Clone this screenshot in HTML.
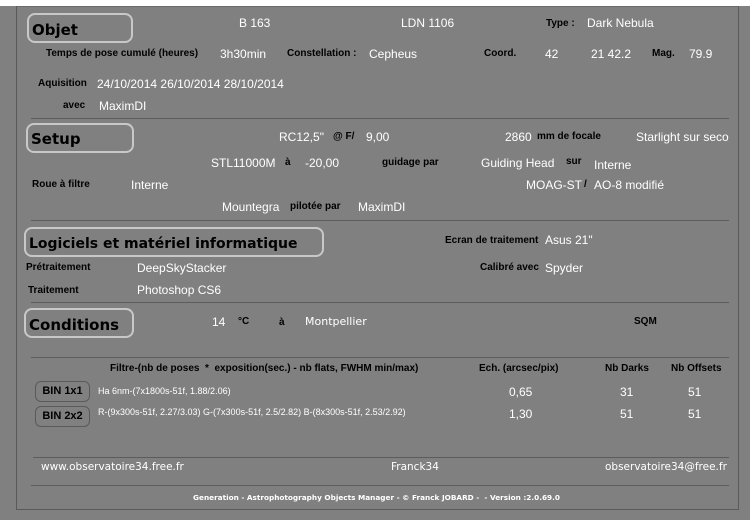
<!DOCTYPE html>
<html><head><meta charset="utf-8"><style>
html,body{margin:0;padding:0}
body{width:750px;height:520px;background:#808080;position:relative;overflow:hidden;font-family:"Liberation Sans",Arial,sans-serif}
.top{position:absolute;left:0;top:0;width:750px;height:6px;background:#fff}
.frame{position:absolute;left:16px;top:6px;width:721px;height:502px;border:1px solid #5a5a5a;border-top-color:#6a6a6a}
.t{position:absolute;white-space:nowrap;line-height:1}
.l{font-weight:bold;font-size:10px;color:#000}
.v{font-size:12px;color:#fff}
.hdr{position:absolute;border:2px solid #c8c8c8;border-radius:8px;box-sizing:border-box;font-family:"DejaVu Sans",Verdana,sans-serif;font-size:14px;color:#000;padding-left:3px;line-height:26px;font-weight:bold}
.hr{position:absolute;left:31px;width:698px;height:1px;background:#5c5c5c}
.bin{position:absolute;left:35px;width:55px;height:21px;border:1px solid #5a5a5a;border-radius:6px;box-sizing:border-box;font-weight:bold;font-size:11px;text-align:center;line-height:19px;color:#000}
.s{font-size:9px;color:#fff}
.f{font-family:"DejaVu Sans",Verdana,sans-serif;color:#fff;font-size:10.5px}
</style></head><body>
<div class="top"></div>
<div class="frame"></div>

<div class="hdr" style="left:27px;top:13px;width:106px;height:30px;line-height:30px;font-size:15px">Objet</div>
<div class="t v" style="left:239px;top:17px">B 163</div>
<div class="t v" style="left:401px;top:17px">LDN 1106</div>
<div class="t l" style="left:546px;top:19px">Type :</div>
<div class="t v" style="left:587px;top:17px">Dark Nebula</div>

<div class="t l" style="left:46px;top:49px">Temps de pose cumulé (heures)</div>
<div class="t v" style="left:220px;top:48px">3h30min</div>
<div class="t l" style="left:287px;top:49px">Constellation :</div>
<div class="t v" style="left:369px;top:48px">Cepheus</div>
<div class="t l" style="left:484px;top:49px">Coord.</div>
<div class="t v" style="left:545px;top:48px">42</div>
<div class="t v" style="left:591px;top:48px">21 42.2</div>
<div class="t l" style="left:652px;top:49px">Mag.</div>
<div class="t v" style="left:689px;top:48px">79.9</div>

<div class="t l" style="left:38px;top:79px">Aquisition</div>
<div class="t v" style="left:97px;top:78px">24/10/2014 26/10/2014 28/10/2014</div>
<div class="t l" style="left:63px;top:101px">avec</div>
<div class="t v" style="left:99px;top:100px">MaximDI</div>

<div class="hr" style="top:118px"></div>
<div class="hdr" style="left:26px;top:123px;width:108px;height:30px;line-height:29px;font-size:15px">Setup</div>
<div class="t v" style="left:279px;top:131px">RC12,5"</div>
<div class="t l" style="left:333px;top:132px">@ F/</div>
<div class="t v" style="left:366px;top:131px">9,00</div>
<div class="t v" style="left:505px;top:131px">2860</div>
<div class="t l" style="left:537px;top:132px">mm de focale</div>
<div class="t v" style="left:636px;top:131px">Starlight sur seco</div>

<div class="t v" style="left:211px;top:157px">STL11000M</div>
<div class="t l" style="left:285px;top:158px">à</div>
<div class="t v" style="left:305px;top:157px">-20,00</div>
<div class="t l" style="left:382px;top:158px">guidage par</div>
<div class="t v" style="left:481px;top:157px">Guiding Head</div>
<div class="t l" style="left:566px;top:157px">sur</div>
<div class="t v" style="left:594px;top:159px">Interne</div>

<div class="t l" style="left:32px;top:180px">Roue à filtre</div>
<div class="t v" style="left:131px;top:179px">Interne</div>
<div class="t v" style="left:526px;top:179px">MOAG-ST</div>
<div class="t l" style="left:584px;top:180px">/</div>
<div class="t v" style="left:594px;top:179px">AO-8 modifié</div>

<div class="t v" style="left:222px;top:201px">Mountegra</div>
<div class="t l" style="left:290px;top:202px">pilotée par</div>
<div class="t v" style="left:358px;top:201px">MaximDI</div>

<div class="hr" style="top:220px"></div>
<div class="hdr" style="left:24px;top:227px;width:300px;height:30px;line-height:31px;font-size:14px">Logiciels et matériel informatique</div>
<div class="t l" style="left:445px;top:236px">Ecran de traitement</div>
<div class="t v" style="left:545px;top:234px">Asus 21"</div>
<div class="t l" style="left:26px;top:263px">Prétraitement</div>
<div class="t v" style="left:137px;top:262px">DeepSkyStacker</div>
<div class="t l" style="left:480px;top:263px">Calibré avec</div>
<div class="t v" style="left:545px;top:262px">Spyder</div>
<div class="t l" style="left:28px;top:286px">Traitement</div>
<div class="t v" style="left:137px;top:284px">Photoshop CS6</div>

<div class="hr" style="top:302px"></div>
<div class="hdr" style="left:24px;top:308px;width:110px;height:30px;line-height:30px;font-size:15px">Conditions</div>
<div class="t v" style="left:212px;top:316px">14</div>
<div class="t l" style="left:238px;top:317px">°C</div>
<div class="t l" style="left:279px;top:318px">à</div>
<div class="t f" style="left:305px;top:316px;font-size:11px">Montpellier</div>
<div class="t l" style="left:634px;top:317px">SQM</div>

<div class="hr" style="top:357px"></div>
<div class="t l" style="left:110px;top:364px">Filtre-(nb de poses&nbsp; *&nbsp; exposition(sec.) - nb flats, FWHM min/max)</div>
<div class="t l" style="left:479px;top:364px">Ech. (arcsec/pix)</div>
<div class="t l" style="left:605px;top:364px">Nb Darks</div>
<div class="t l" style="left:671px;top:364px">Nb Offsets</div>

<div class="bin" style="top:381px">BIN 1x1</div>
<div class="t s" style="left:98px;top:387px">Ha 6nm-(7x1800s-51f, 1.88/2.06)</div>
<div class="t v" style="left:509px;top:386px">0,65</div>
<div class="t v" style="left:620px;top:386px">31</div>
<div class="t v" style="left:688px;top:386px">51</div>

<div class="bin" style="top:406px">BIN 2x2</div>
<div class="t s" style="left:98px;top:408px">R-(9x300s-51f, 2.27/3.03) G-(7x300s-51f, 2.5/2.82) B-(8x300s-51f, 2.53/2.92)</div>
<div class="t v" style="left:509px;top:408px">1,30</div>
<div class="t v" style="left:620px;top:408px">51</div>
<div class="t v" style="left:688px;top:408px">51</div>

<div class="hr" style="top:457px;left:33px;width:696px"></div>
<div class="t f" style="left:41px;top:462px">www.observatoire34.free.fr</div>
<div class="t f" style="left:391px;top:462px">Franck34</div>
<div class="t f" style="left:605px;top:462px">observatoire34@free.fr</div>
<div class="hr" style="top:485px;left:31px;width:698px"></div>
<div class="t f" style="left:193px;top:494px;font-size:7.3px;font-weight:bold">Generation - Astrophotography Objects Manager - © Franck JOBARD -&nbsp; - Version :2.0.69.0</div>
</body></html>
